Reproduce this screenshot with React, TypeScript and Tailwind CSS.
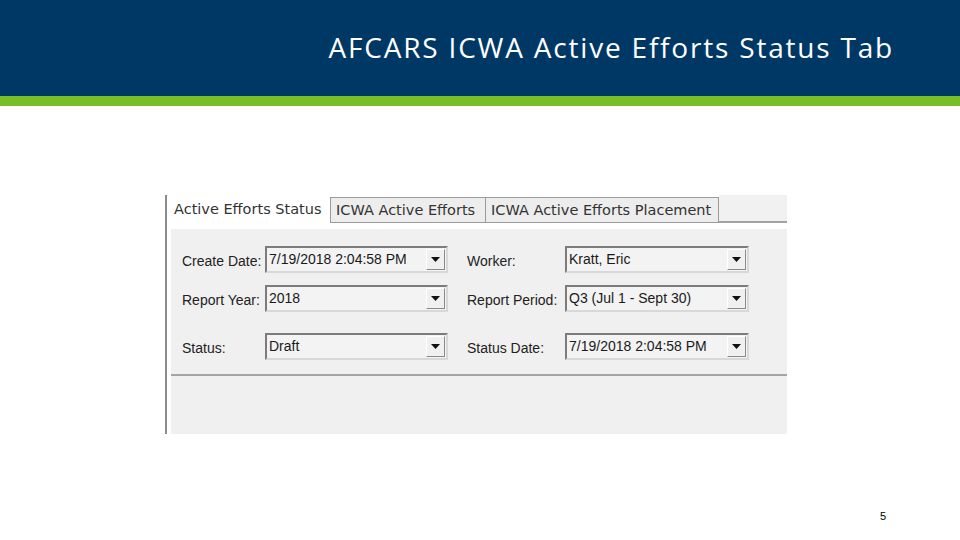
import React from "react";

const tabFont = { fontFamily: '"DejaVu Sans", Verdana, sans-serif' };
const formFont = { fontFamily: '"Liberation Sans", Arial, sans-serif' };

function Dropdown({ value, width }: { value: string; width: string }) {
  return (
    <div
      className={`${width} h-[27px] flex items-stretch border-2 border-t-[#7c7c7c] border-l-[#7c7c7c] border-b-[#d8d8d8] border-r-[#d8d8d8] bg-[#f3f3f3]`}
    >
      <div className="flex-1 pl-[2px] text-[14px] leading-[23px] text-[#1a1a1a] whitespace-nowrap">
        {value}
      </div>
      <div className="w-[19px] my-[1px] mr-[1px] flex items-center justify-center bg-[#f0f0f0] border border-t-[#ffffff] border-l-[#ffffff] border-b-[#8a8a8a] border-r-[#8a8a8a]">
        <svg width="9" height="5" viewBox="0 0 9 5">
          <path d="M0 0h9L4.5 5z" fill="#111" />
        </svg>
      </div>
    </div>
  );
}

function Row({
  label1,
  value1,
  label2,
  value2,
  className,
}: {
  label1: string;
  value1: string;
  label2: string;
  value2: string;
  className: string;
}) {
  return (
    <div className={`flex items-center ${className}`}>
      <div className="w-[83px] text-[14px] text-[#222] pt-[3px]">{label1}</div>
      <Dropdown value={value1} width="w-[183px]" />
      <div className="w-[98px] ml-[19px] text-[14px] text-[#222] pt-[3px]">{label2}</div>
      <Dropdown value={value2} width="w-[184px]" />
    </div>
  );
}

function StatusTabScreenshot() {
  return (
    <div className="ml-[165px] mt-[89px] w-[622px] h-[239px] flex flex-col border-l-2 border-[#8c8c8c] bg-white">
      <div className="flex items-end h-[28px] text-[14.5px] text-[#333]" style={tabFont}>
        <div className="w-[163px] h-[26px] pl-[7px] leading-[24px] whitespace-nowrap">
          Active Efforts Status
        </div>
        <div className="w-[156px] h-[26px] px-[5px] leading-[24px] whitespace-nowrap bg-[#ededed] border border-[#9a9a9a]">
          ICWA Active Efforts
        </div>
        <div className="w-[233px] h-[26px] px-[5px] leading-[24px] whitespace-nowrap bg-[#ededed] border border-l-0 border-[#9a9a9a]">
          ICWA Active Efforts Placement
        </div>
        <div className="flex-1 h-[28px] bg-[#f1f1f1] border-b-2 border-[#a2a2a2]" />
      </div>
      <div className="flex-1 ml-[4px] mt-[6px] bg-[#f0f0f0] flex flex-col" style={formFont}>
        <div className="pl-[11px]">
          <Row
            className="mt-[17px]"
            label1="Create Date:"
            value1="7/19/2018 2:04:58 PM"
            label2="Worker:"
            value2="Kratt, Eric"
          />
          <Row
            className="mt-[12px]"
            label1="Report Year:"
            value1="2018"
            label2="Report Period:"
            value2="Q3 (Jul 1 - Sept 30)"
          />
          <Row
            className="mt-[21px]"
            label1="Status:"
            value1="Draft"
            label2="Status Date:"
            value2="7/19/2018 2:04:58 PM"
          />
        </div>
        <div className="mt-[14px] h-[2px] bg-[#a4a4a4]" />
      </div>
    </div>
  );
}

export default function App() {
  return (
    <div className="w-[960px] h-[540px] bg-white flex flex-col overflow-hidden">
      <header className="h-[96px] bg-[#003865] flex items-center justify-end pr-[66px]">
        <h1
          className="text-white text-[28px] tracking-[1.8px] leading-none pb-[2px]"
          style={{ fontFamily: '"Open Sans", Lato, sans-serif' }}
        >
          AFCARS ICWA Active Efforts Status Tab
        </h1>
      </header>
      <div className="h-[10px] bg-[#78be28]" />
      <StatusTabScreenshot />
      <div className="flex justify-end pr-[74px] mt-[74px]">
        <span className="text-[11px] text-black" style={formFont}>
          5
        </span>
      </div>
    </div>
  );
}
